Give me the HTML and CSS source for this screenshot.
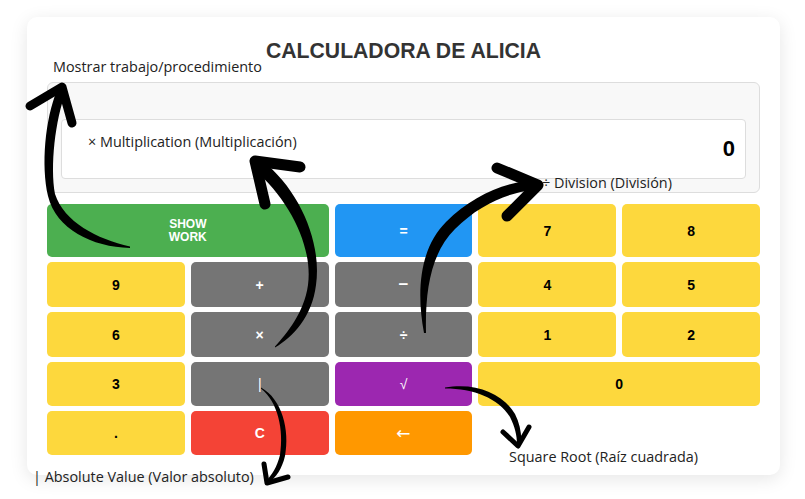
FILE: index.html
```html
<!DOCTYPE html>
<html lang="es">
<head>
<meta charset="utf-8">
<title>Calculadora de Alicia</title>
<link rel="stylesheet" href="styles.css">
</head>
<body>
<div class="card">
  <h1 class="title">CALCULADORA DE ALICIA</h1>
  <div class="display">
    <div class="screen">0</div>
  </div>
  <div class="keys">
    <button class="key green span2 small">SHOW<br>WORK</button>
    <button class="key blue">=</button>
    <button class="key yellow">7</button>
    <button class="key yellow">8</button>
    <button class="key yellow">9</button>
    <button class="key gray">+</button>
    <button class="key gray wide-glyph">&minus;</button>
    <button class="key yellow">4</button>
    <button class="key yellow">5</button>
    <button class="key yellow">6</button>
    <button class="key gray">&times;</button>
    <button class="key gray">&divide;</button>
    <button class="key yellow">1</button>
    <button class="key yellow">2</button>
    <button class="key yellow">3</button>
    <button class="key gray thin">|</button>
    <button class="key purple thin">&radic;</button>
    <button class="key yellow span2">0</button>
    <button class="key yellow">.</button>
    <button class="key red">C</button>
    <button class="key orange arrow-glyph">&larr;</button>
  </div>
</div>

<div class="note note-show">Mostrar trabajo/procedimiento</div>
<div class="note note-mul">&times; Multiplication (Multiplicación)</div>
<div class="note note-div">&divide; Division (División)</div>
<div class="note note-abs">| Absolute Value (Valor absoluto)</div>
<div class="note note-sqrt">Square Root (Raíz cuadrada)</div>

<svg class="arrows" width="805" height="499" viewBox="0 0 805 499" xmlns="http://www.w3.org/2000/svg">
  <!-- arrow 1: show work -->
  <path class="shaft" d="M57,90 C45,120 41,165 48,196 C56,229 92,247 130,248 L130,246.5 C97,239 64,222 55,194 C50,166 55,121 66,91 Z"/>
  <polyline class="head" points="30,106 62,87 72,123"/>
  <!-- arrow 2: multiplication -->
  <path class="shaft" d="M261.7,160.3 C300,190 322,243 316,285 C312,317 293,337 275,347.5 L275,346.5 C287,333 304,313 308,285 C313,247 290,200 254.3,169.7 Z"/>
  <polyline class="head thick" points="300,167 255,161 265,204"/>
  <!-- arrow 3: division -->
  <path class="shaft" d="M424,333 C416,290 420,248 446,222 C472,196 503,183 533,180 L533,190 C507,193 479,205 455,229 C431,253 425,290 426,333 Z"/>
  <polyline class="head thick" points="497,168 538,185 507,216"/>
  <!-- arrow 4: absolute value -->
  <path class="shaft" d="M261,387.5 C282,399 290,430 285,456 C282,469 276,477 269,483 L266,481 C272,475 277,467 280,455 C284,430 278,402 261,388.5 Z"/>
  <polyline class="head small" points="264,464 267,483 288,477"/>
  <!-- arrow 5: square root -->
  <path class="shaft" d="M445,387.5 C477,382 503,394 515,414 C520,424 522,435 521,444 L517,444 C517,436 515,427 510,417 C498,398 474,388.5 445,388.5 Z"/>
  <polyline class="head small" points="503,432 518,446 529,427"/>
</svg>
</body>
</html>
```

FILE: styles.css
```css
html, body {
  margin: 0;
  padding: 0;
  background: #ffffff;
}

body {
  width: 805px;
  height: 499px;
  overflow: hidden;
  position: relative;
  font-family: "Liberation Sans", Arial, sans-serif;
}

.card {
  box-sizing: border-box;
  width: 753px;
  margin: 17px 0 0 27px;
  padding: 20px;
  background: #ffffff;
  border-radius: 10px;
  box-shadow: 0 4px 18px rgba(0, 0, 0, 0.10);
}

.title {
  margin: 2px 0 19px;
  font-size: 21.2px;
  line-height: 24px;
  font-weight: bold;
  color: #333333;
  text-align: center;
}

.display {
  padding: 36px 13px 13px;
  background: #f8f8f8;
  border: 1px solid #dddddd;
  border-radius: 6px;
}

.screen {
  height: 58px;
  display: flex;
  align-items: center;
  justify-content: flex-end;
  padding-right: 10px;
  background: #ffffff;
  border: 1px solid #dddddd;
  border-radius: 4px;
  font-size: 22px;
  font-weight: bold;
  color: #000000;
}

.keys {
  margin-top: 11px;
  display: grid;
  grid-template-columns: repeat(5, 1fr);
  grid-template-rows: 53px 45px 45px 44px 44px;
  column-gap: 6px;
  row-gap: 5px;
}

.key {
  border: none;
  border-radius: 5px;
  padding: 0;
  font-family: "Liberation Sans", Arial, sans-serif;
  font-size: 14px;
  font-weight: bold;
  color: #ffffff;
  display: flex;
  align-items: center;
  justify-content: center;
  text-align: center;
}

.span2 { grid-column: span 2; }
.small { font-size: 12px; line-height: 12.5px; }
.thin { font-weight: normal; }
.wide-glyph { font-size: 17px; }
.arrow-glyph { font-family: "DejaVu Sans", sans-serif; font-size: 17px; font-weight: normal; }

.yellow { background: #fdd83d; color: #000000; }
.green  { background: #4caf50; }
.blue   { background: #2196f3; }
.gray   { background: #757575; }
.purple { background: #9c27b0; }
.red    { background: #f44336; }
.orange { background: #ff9800; }

.note {
  position: absolute;
  font-family: "Open Sans", "Noto Sans", sans-serif;
  font-size: 14.4px;
  line-height: 19px;
  color: #222222;
  white-space: nowrap;
}

.note-show { left: 53px; top: 57px; }
.note-mul  { left: 88px; top: 132px; }
.note-div  { left: 542px; top: 173px; }
.note-abs  { left: 33px; top: 467px; }
.note-sqrt { left: 509px; top: 447px; }

.arrows {
  position: absolute;
  left: 0;
  top: 0;
  pointer-events: none;
}

.shaft { fill: #000000; }

.head {
  fill: none;
  stroke: #000000;
  stroke-width: 9;
  stroke-linecap: round;
  stroke-linejoin: round;
}

.head.thick { stroke-width: 11; }
.head.small { stroke-width: 5; }
```
